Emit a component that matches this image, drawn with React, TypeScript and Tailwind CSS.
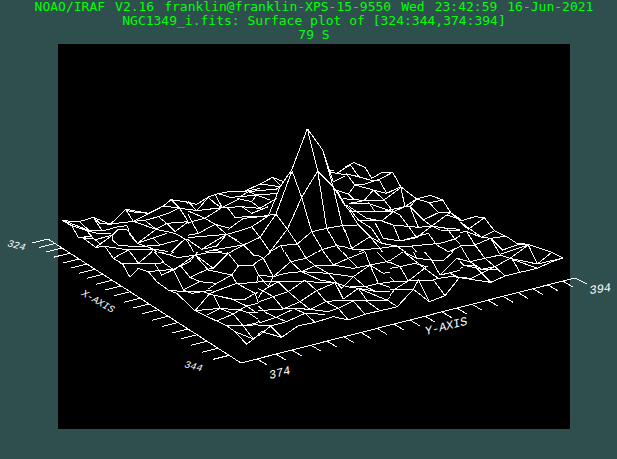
type Patch = {
  x: number;
  y: number;
  // visible window of the patch: left, top, width, height
  view: [number, number, number, number];
  d: string;
};

// The wireframe is stored in adjoining patches, each at three units per pixel.
const surface: Patch[] = [
  {
    x: 50,
    y: 180,
    view: [50, 180, 138, 72],
    d: "M37 122 88 125 130 112 181 133 227 88 297 100 340 78 363 59 410 66 450 73M37 122 65 137 85 172 98 173 137 202 165 199 235 210 310 207 355 215M65 137 110 152 150 162 184 160M37 122 62 130 118 152 157 153 205 140 232 137M88 125 118 152M130 112 157 153M130 112 150 130 181 133 200 130 250 124 297 100M227 88 250 124M227 88 240 95 297 100M98 173 140 178 188 165M110 152 130 175 153 193M85 172 122 170M137 202 188 165 205 148 232 150M188 165 187 180 205 196 265 200 330 195 385 180M165 199 190 235 218 252 241 292 270 266 283 247 310 208M190 235 235 210 265 248M218 252 265 248 345 237 440 225M232 150 262 190M232 137 240 165 262 190 305 175 350 160M250 124 285 121 325 110 355 100 388 84 450 95M285 121 318 148M325 110 350 130M340 78 388 84M363 59 388 84 415 125M410 66 428 92M318 148 350 130 415 125 450 120M350 130 375 155 415 125M318 148 262 190M318 148 375 160 405 177 450 180M250 124 318 148M262 190 310 207M345 237 385 195 405 177 430 200 440 225M310 175 330 195M310 208 345 237 370 262 410 262M265 248 310 245 335 285",
  },
  {
    x: 180,
    y: 110,
    view: [188, 110, 157, 142],
    d: "M382 56 335 180 300 230 265 318M382 56 428 120 460 232 487 347 517 415M382 56 413 183 440 355 470 407 500 445M335 180 365 262 395 365 427 418 440 450M413 183 365 262 322 358 270 425M413 183 460 230 530 345M335 185 288 312 322 358 352 402 380 445M288 312 240 382 270 425 302 407 352 402 395 365 440 355 487 347 540 347M428 120 450 185 460 215M427 418 470 407 517 415 540 405M427 418 380 445M302 407 325 450M288 312 240 320 190 325M190 405 240 382M190 405 225 437 270 425M0 271 50 283 85 261 115 251 150 244 195 243 240 222 278 202 310 215M0 292 50 302 85 262 105 280 125 293 185 290 240 295M105 253 125 290M140 290 165 322 210 320 265 318M25 275 50 302 125 293 75 325 105 343 140 373M0 292 18 300 35 335 55 370 105 343 150 355M0 350 35 335 75 325 18 300M0 380 55 370M0 378 18 385 65 418 140 373 170 365 215 350 265 318M0 385 140 373 190 405 145 430M18 385 45 433M65 418 110 408 140 373M145 358 190 325M215 350 240 382M145 430 160 450M0 440 45 433 100 420 190 405M145 430 100 420M115 251 150 262 180 260 205 245 290 237 305 225M170 265 215 275 240 295 290 265M180 260 230 255 295 250M205 245 230 255 270 270M125 293 180 265M215 275 230 255M185 290 215 310 265 290M240 222 300 230M278 202 300 225M190 245 240 235M140 373 170 390M450 182 463 182M450 185 470 190 515 162 540 170M515 162 523 157 540 165M460 215 500 195 540 200M470 190 500 195 525 222 500 250 467 240M525 222 540 222M515 162 530 185M500 250 540 262M470 240 495 285 540 290M490 265 540 270M495 285 515 310 540 320",
  },
  {
    x: 340,
    y: 140,
    view: [345, 140, 115, 112],
    d: "M0 88 42 68 75 82 95 115 125 98 158 97 182 140 230 177 272 166 308 180 332 218 365 240 390 233M0 90 32 76 55 108M0 103 20 102 55 110 90 120 118 120 140 160 182 140M20 102 45 135 25 162 0 160M45 135 75 132 118 118 158 97M45 135 100 150 140 160M100 150 72 182 28 190M100 150 132 180 182 143M25 162 42 178 72 182 132 180 160 215 195 200M0 170 30 180 42 178M182 140 195 200 230 177M195 200 210 200 235 262M85 185 105 215 160 215M28 190 85 190 160 215M20 195 55 240 95 265 125 310M28 200 80 235 125 243 160 215M55 240 125 243 160 255 235 262 275 258M30 215 105 215M105 248 130 295 180 303 230 293 275 258M160 215 180 225 230 293M160 255 180 303M0 175 30 215 55 255 90 290 125 310 170 318 215 318M0 230 35 325 90 290 120 325 145 365M0 255 50 257M0 318 50 330 120 325 170 318M125 215 195 200M210 200 250 240 275 258 320 225 332 218M230 177 268 188 308 180M230 177 210 200M268 188 295 218 332 218M295 218 250 240M332 218 390 270M320 225 365 240M275 258 320 265 390 270M275 258 300 270 382 272 345 297 300 310 215 318M265 280 180 303M265 280 290 315 325 335M320 265 345 297 365 318 390 360M215 318 240 350 290 345 325 335 365 318 390 318M345 325 312 360 260 357 225 352 195 335 170 318M0 318 25 350 45 390M25 350 70 330 100 370 75 390M25 350 0 365",
  },
  {
    x: 450,
    y: 190,
    view: [460, 190, 110, 110],
    d: "M0 65 35 92 75 80 103 83 133 122 170 140 200 160 235 163 305 187 340 204 305 215 262 235 210 247 165 258 122 277 30 263 0 295M0 75 25 92 55 118 103 83M25 92 95 142 133 122M0 98 35 92M0 130 50 125 95 142 122 145 170 138M0 128 30 165 75 165 50 125M75 165 122 145 150 193 235 165M122 145 158 180 200 165 235 163M0 195 30 165 60 215 150 195 180 205M75 165 105 205 135 230 95 238 60 215 20 205 0 210M135 230 180 205 235 165 262 222 305 187M180 205 262 222 340 204M180 205 262 235M185 205 210 247M135 230 165 258M20 205 40 225 95 238 140 240M40 225 80 225M0 245 20 240 40 230M75 230 122 277M135 230 65 265 30 263M0 245 30 263M0 260 65 265",
  },
  {
    x: 120,
    y: 240,
    view: [100, 252, 158, 120],
    d: "M-45 19 -20 55 8 72M-20 55 25 30 55 68M0 70 8 72 30 112 55 85 85 95 110 125 145 150 190 155M145 150 170 160 225 212 290 243 320 257 345 275 380 313 400 297 450 258M8 72 55 70 105 72 130 68 160 88M25 32 30 35 55 70 100 32 30 35M100 32 130 65M100 32 150 45 175 53 225 45 270 37 325 40 355 78 335 105M105 72 125 105 160 88 190 150M85 95 160 88 210 65 225 45M180 75 210 112 240 125M125 105 165 88 225 45 265 90 335 105M210 112 262 88 280 85 325 40M225 45 240 55 280 85M355 78 400 75 435 45 450 45M290 130 240 125 190 150 215 160 275 150M290 130 335 105 350 130 270 160 225 212M290 130 265 147M190 155 250 155 280 165 345 180 375 178 405 160 350 130 410 128 445 140M280 165 300 205 262 225M225 212 300 205 360 210M290 243 340 222 370 258 320 257M300 205 340 222 360 210 385 218 450 220M280 165 330 175 380 198 405 215M360 210 380 198 415 190 450 185M385 218 425 245 370 258 400 297 345 275M370 258 450 250M425 245 450 230M405 160 415 190M405 160 450 150M400 75 415 105 445 140M415 105 450 108M415 105 410 128M90 22 145 45M150 45 200 0 240 27 225 45M195 0 235 30 270 37M240 27 280 0M290 0 325 40 370 15 380 0M370 15 400 45 435 45M430 0 450 30",
  },
  {
    x: 250,
    y: 220,
    view: [258, 252, 132, 110],
    d: "M0 360 35 335 95 352 145 317 195 307 250 290 295 300 345 283 390 272 450 260M0 350 10 360 62 318 95 352M0 313 62 318 110 305 165 280 195 307M30 308 78 292 110 305M0 277 25 272 130 265 180 268 235 275 265 265 310 243 345 283M0 275 30 308M45 277 78 292 125 270M165 280 225 283M265 265 295 300M0 250 15 250 70 230 100 267 150 245 115 215 70 230 38 212 0 195M15 250 45 275M130 265 165 280M150 245 180 268 228 245 200 212 150 245M228 245 275 240 410 240 450 260M345 240 390 272M228 245 265 265M38 212 85 185 115 215 165 180 200 212 255 188 280 237 325 205 350 240M0 185 85 185 165 183 200 187 255 188 290 200 325 205 380 215 450 212M38 212 15 250M325 205 410 240 450 210M300 200 345 200 385 190 450 185M345 200 380 215M0 135 40 115 70 170 105 160 155 155 210 180 255 188M70 170 55 200 85 185M25 165 55 200M25 165 70 170M0 135 25 165 0 185M70 170 122 125 93 77 60 98 30 50M10 100 40 115 60 98 110 25M142 70 93 77M142 70 185 35M142 70 168 115 122 125 155 155 195 137 250 135 215 88 168 115 195 137 235 160 310 170 345 200M185 35 215 88 262 77 232 25M278 15 305 87 262 77 295 115 250 135 310 145 360 135 345 95 295 115 325 145M305 87 345 92 410 85 450 85M325 15 355 50 305 87M325 15 395 70 450 60M355 50 375 90 410 125 450 110M345 95 375 90M360 135 410 125 450 140M360 135 385 190 430 205 450 200M360 135 400 160 450 150M310 170 360 135M235 160 275 205 310 170M155 155 235 160M345 10 380 40 450 65",
  },
  {
    x: 380,
    y: 220,
    view: [390, 252, 70, 60],
    d: "M0 273 52 260 100 208 148 245 195 227 238 173 335 187 390 160M0 240 20 240 52 260M0 210 100 208 115 180 148 245M0 187 85 183 45 207 20 240M0 150 25 125 60 140 85 183 115 180 160 180 195 227M60 140 0 150M5 150 45 185M60 140 105 130 140 140 85 183M0 95 25 125 70 95 110 115 155 120 190 122 240 77M70 95 140 150 175 175 160 180M155 120 180 165 230 115 260 120 300 145 345 143M180 165 225 155 280 140 230 115M175 175 210 170 300 175 335 187M238 173 210 160M280 140 305 165 335 187M240 77 270 125 320 120M130 92 155 120M90 75 110 115M130 92 210 95 240 77",
  },
];

const xTicks = [55, 62, 70, 79, 87, 95, 103, 112, 121, 130, 140, 149, 158, 168, 178, 188, 197, 207, 218, 229];
const yTicks = [257, 276, 292, 311, 327, 344, 361, 377, 394, 410, 425, 442, 457, 472, 488, 503, 518, 533, 548, 563];

const labels = [
  { text: "324", x: 7, y: 246, angle: 14, size: "text-[10px]" },
  { text: "X-AXIS", x: 81, y: 295, angle: 30, size: "text-[10px]" },
  { text: "344", x: 184, y: 367, angle: 14, size: "text-[10px]" },
  { text: "374", x: 270, y: 379, angle: -14, size: "text-[12px]" },
  { text: "Y-AXIS", x: 426, y: 335, angle: -14, size: "text-[12px]" },
  { text: "394", x: 590, y: 294, angle: -8, size: "text-[12px]" },
];

function SurfacePatch({ x, y, view, d }: Patch) {
  const [left, top, width, height] = view;
  return (
    <svg
      x={left}
      y={top}
      width={width}
      height={height}
      viewBox={`${(left - x) * 3} ${(top - y) * 3} ${width * 3} ${height * 3}`}
    >
      <path d={d} strokeWidth="3" />
    </svg>
  );
}

function SurfacePlot() {
  return (
    <svg
      viewBox="58 44 512 385"
      className="block w-full overflow-visible"
      role="img"
      aria-label="Surface plot"
    >
      <g fill="none" stroke="white" strokeWidth="1" shapeRendering="crispEdges">
        {surface.map((p) => (
          <SurfacePatch key={`${p.x}-${p.y}`} {...p} />
        ))}
        <path d="M32 243 48 239 241 363 575 278 587 284" />
        {xTicks.map((x) => (
          <path key={x} d={`M${x} ${239 + (x - 48) * 0.643}l-16 4`} />
        ))}
        {yTicks.map((x) => (
          <path key={x} d={`M${x} ${363 - (x - 241) * 0.2545}l10 6`} />
        ))}
      </g>
      <g fill="white" className="font-['Liberation_Mono',monospace] italic">
        {labels.map((l) => (
          <text
            key={l.text}
            transform={`translate(${l.x} ${l.y}) rotate(${l.angle})`}
            className={l.size}
          >
            {l.text}
          </text>
        ))}
      </g>
    </svg>
  );
}

export default function App() {
  return (
    <main className="min-h-screen overflow-hidden bg-[#2f4f4f]">
      <header className="flex flex-col items-center pr-px pb-[2px] pl-3 font-['DejaVu_Sans_Mono',monospace] text-[13px] leading-[14px] whitespace-pre text-[#00ff00]">
        <h1 className="flex gap-[10px]">
          <span>NOAO/IRAF</span>
          <span>V2.16</span>
          <span>franklin@franklin-XPS-15-9550</span>
          <span>Wed</span>
          <span>23:42:59</span>
          <span>16-Jun-2021</span>
        </h1>
        <p>NGC1349_i.fits: Surface plot of [324:344,374:394]</p>
        <p>79 S</p>
      </header>
      <figure className="mr-[47px] ml-[58px] bg-black">
        <SurfacePlot />
      </figure>
    </main>
  );
}
